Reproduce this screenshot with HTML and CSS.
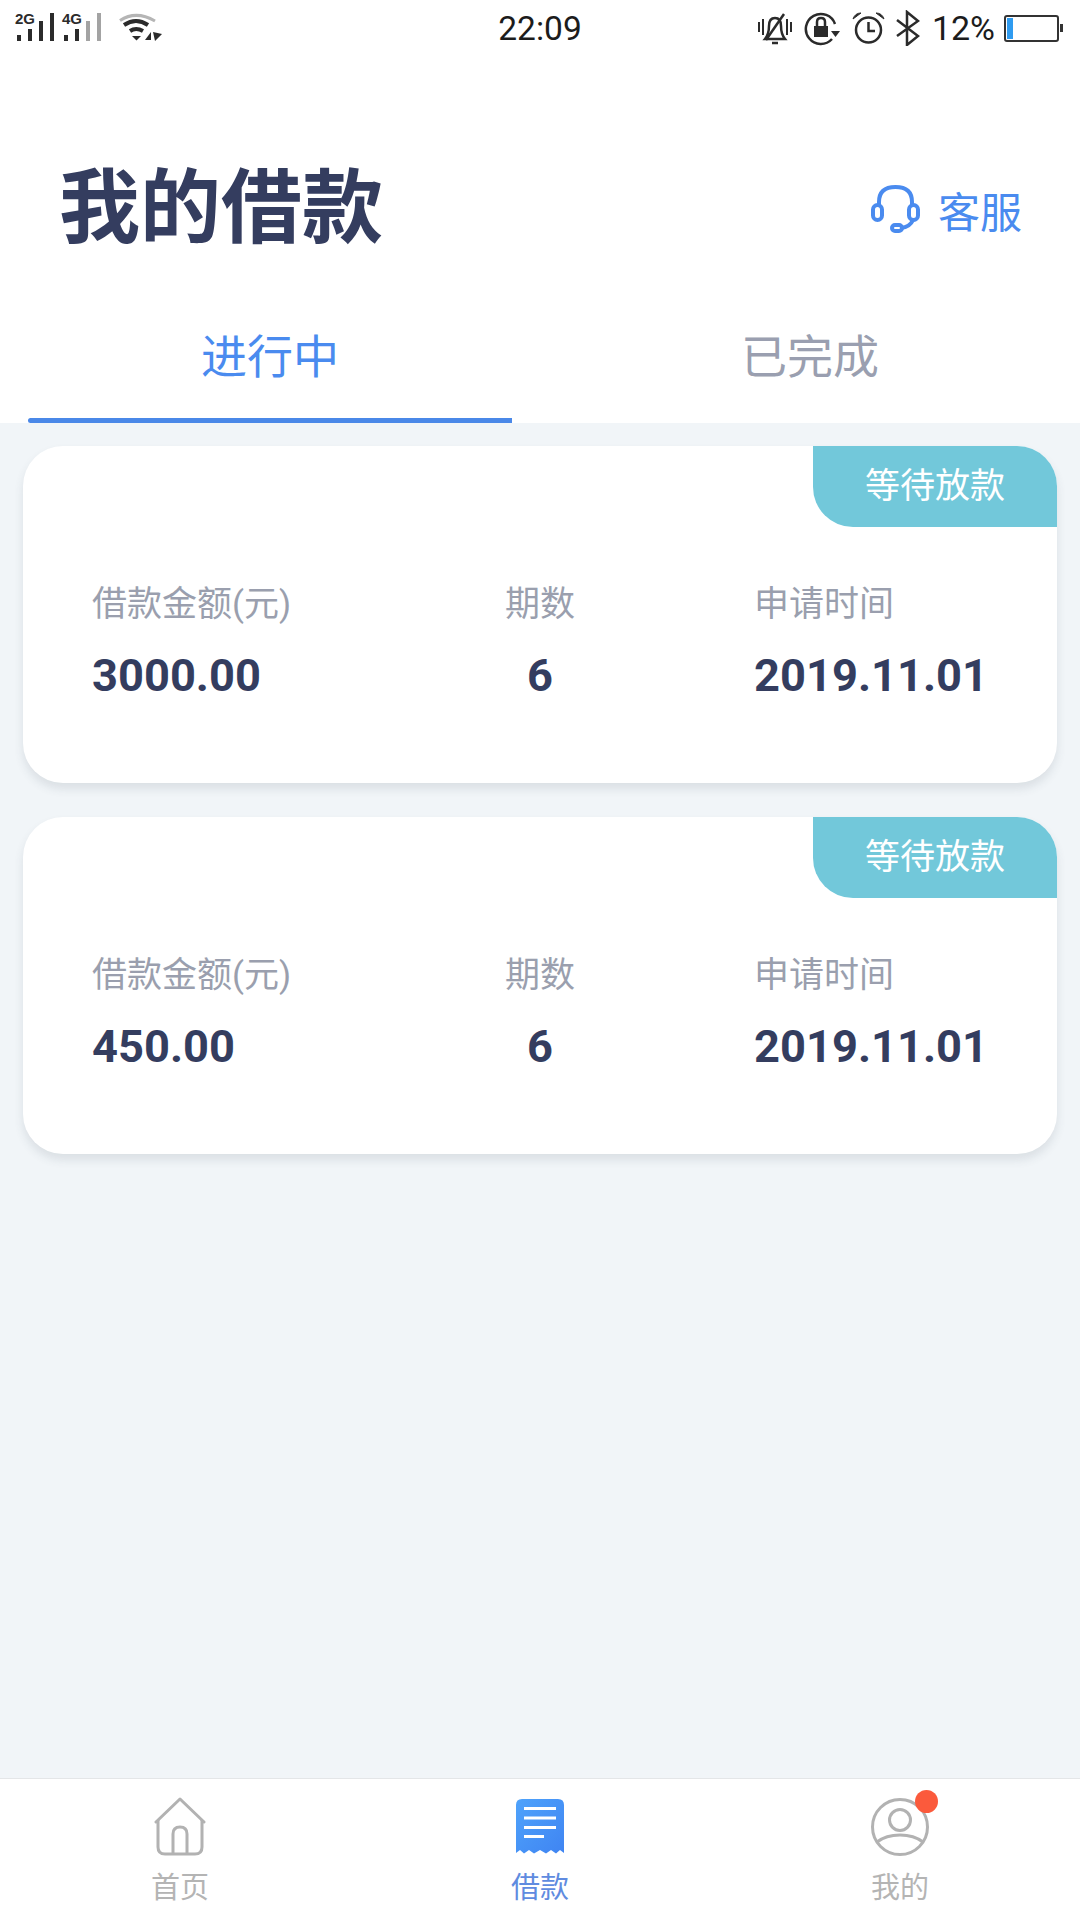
FILE: index.html
```html
<!DOCTYPE html>
<html lang="zh-CN">
<head>
    <meta charset="UTF-8">
    <meta name="viewport" content="width=device-width, initial-scale=1.0">
    <title>我的借款</title>
    <link rel="stylesheet" href="styles.css">
</head>
<body>
    <div class="status-bar">
        <svg class="status-left" width="170" height="56" viewBox="0 0 170 56">
            <text x="15" y="24" class="net-label">2G</text>
            <text x="62" y="24" class="net-label">4G</text>
            <g fill="#2b2b2b">
                <rect x="17" y="35" width="4" height="6"/>
                <rect x="28" y="29" width="4" height="12"/>
                <rect x="39" y="21" width="4" height="20"/>
                <rect x="50" y="13" width="4" height="28"/>
                <rect x="64" y="35" width="4" height="6"/>
                <rect x="75" y="29" width="4" height="12"/>
            </g>
            <g fill="#a3a3a3">
                <rect x="86" y="21" width="4" height="20"/>
                <rect x="97" y="13" width="4" height="28"/>
            </g>
            <path d="M120 20.500 Q136 10 155 21" fill="none" stroke="#b5b5b5" stroke-width="3"/>
            <g fill="none" stroke="#2b2b2b" stroke-width="4">
                <path d="M124 25 Q136 17 148 25"/>
                <path d="M130 31 Q136 27 143 31"/>
            </g>
            <path d="M132 36 L141 36 L136.500 40.500 Z" fill="#2b2b2b"/>
            <path d="M145 40 L151 32 L151 40 Z M153 32 L162 34 L155 41 Z" fill="#2b2b2b"/>
        </svg>
        <div class="clock">22:09</div>
        <div class="status-right">
            <svg class="bell" width="36" height="36" viewBox="0 0 36 36" fill="none" stroke="#2b2b2b" stroke-width="2.500">
                <path d="M8 29 Q12 24 12 16 Q12 8 18 8 Q24 8 24 16 Q24 24 28 29 Z"/>
                <path d="M9 30 L27 4"/>
                <path d="M15 33 L21 33"/>
                <path d="M2 12 L2 22 M6 9 L6 25 M30 9 L30 25 M34 12 L34 22" stroke-width="2"/>
            </svg>
            <svg class="lock" width="36" height="36" viewBox="0 0 36 36" fill="none" stroke="#2b2b2b" stroke-width="2.500">
                <path d="M31 14 A15 15 0 1 0 28 29"/>
                <rect x="10" y="16" width="14" height="11" fill="#2b2b2b" stroke="none"/>
                <path d="M13 16 V12 Q13 8 17 8 Q21 8 21 12 V16"/>
                <path d="M27 21 L36 21 L31.500 27 Z" fill="#2b2b2b" stroke="none"/>
            </svg>
            <svg class="alarm" width="33" height="36" viewBox="0 0 33 36" fill="none" stroke="#2b2b2b" stroke-width="2.500">
                <circle cx="16.500" cy="20" r="12.500"/>
                <path d="M16.500 12 V21 H23"/>
                <path d="M1 9 Q3 3 9 3 Z M32 9 Q30 3 24 3 Z" fill="#2b2b2b" stroke-width="1"/>
            </svg>
            <svg class="bluetooth" width="24" height="36" viewBox="0 0 24 36" fill="none" stroke="#2b2b2b" stroke-width="2.500">
                <path d="M1 10 L22 26 L11 35 L11 2 L22 11 L1 26"/>
            </svg>
            <span class="battery-text">12%</span>
            <div class="battery">
                <div class="battery-fill"></div>
            </div>
            <div class="battery-tip"></div>
        </div>
    </div>

    <div class="header">
        <h1>我的借款</h1>
        <a href="#" class="service">
            <svg width="52" height="48" viewBox="0 0 52 48" fill="none" stroke="#4a8bef" stroke-width="4">
                <path d="M9 20 V17 Q9 2 25.500 2 Q42 2 42 17 V20"/>
                <rect x="3" y="20" width="9" height="15" rx="4.500"/>
                <rect x="39" y="20" width="9" height="15" rx="4.500"/>
                <path d="M43 35 Q40 42 31 43"/>
                <rect x="22" y="40" width="10" height="6" rx="3"/>
            </svg>
            <span>客服</span>
        </a>
    </div>

    <div class="tabs">
        <a href="#" class="tab active">进行中</a>
        <a href="#" class="tab">已完成</a>
    </div>

    <div class="content">
        <div class="card">
            <div class="badge">等待放款</div>
            <div class="card-row">
                <div class="col">
                    <div class="label">借款金额(元)</div>
                    <div class="value">3000.00</div>
                </div>
                <div class="col center">
                    <div class="label">期数</div>
                    <div class="value">6</div>
                </div>
                <div class="col end">
                    <div class="label">申请时间</div>
                    <div class="value">2019.11.01</div>
                </div>
            </div>
        </div>
        <div class="card">
            <div class="badge">等待放款</div>
            <div class="card-row">
                <div class="col">
                    <div class="label">借款金额(元)</div>
                    <div class="value">450.00</div>
                </div>
                <div class="col center">
                    <div class="label">期数</div>
                    <div class="value">6</div>
                </div>
                <div class="col end">
                    <div class="label">申请时间</div>
                    <div class="value">2019.11.01</div>
                </div>
            </div>
        </div>
    </div>

    <nav class="bottom-nav">
        <a href="#" class="nav-item">
            <svg width="60" height="60" viewBox="0 0 60 60" fill="none" stroke="#b2b2b2" stroke-width="3">
                <path d="M6 25 L30 2 L54 25" stroke-linejoin="round" stroke-linecap="round"/>
                <path d="M8 23 V50 Q8 57 15 57 H45 Q52 57 52 50 V23"/>
                <path d="M23 57 V37 Q23 30 30 30 Q37 30 37 37 V57"/>
            </svg>
            <span>首页</span>
        </a>
        <a href="#" class="nav-item active">
            <svg width="60" height="60" viewBox="0 0 60 60">
                <defs>
                    <linearGradient id="doc-fill" x1="0" y1="0" x2="1" y2="1">
                        <stop offset="0" stop-color="#4fa3fb"/>
                        <stop offset="1" stop-color="#3f84f2"/>
                    </linearGradient>
                </defs>
                <path d="M6 8 Q6 2 12 2 H48 Q54 2 54 8 V56 L50 53 L46 56.500 L41 53 L36 56.500 L30 53 L24 56.500 L19 53 L14 56.500 L10 53 L6 56 Z" fill="url(#doc-fill)"/>
                <g fill="#fff">
                    <rect x="14" y="10" width="32" height="3"/>
                    <rect x="14" y="19.500" width="32" height="3"/>
                    <rect x="14" y="29" width="32" height="3"/>
                    <rect x="14" y="38" width="20" height="3"/>
                </g>
            </svg>
            <span>借款</span>
        </a>
        <a href="#" class="nav-item">
            <span class="avatar">
                <svg width="60" height="60" viewBox="0 0 60 60" fill="none" stroke="#b2b2b2" stroke-width="3">
                    <circle cx="30" cy="30" r="27.500"/>
                    <circle cx="30" cy="23" r="10.500"/>
                    <path d="M7 45 Q16 38 30 38 Q44 38 53 45"/>
                </svg>
                <span class="dot"></span>
            </span>
            <span>我的</span>
        </a>
    </nav>
</body>
</html>
```

FILE: styles.css
```css
body {
    font-family: Roboto, "Noto Sans CJK SC", sans-serif;
    margin: 0;
    padding: 0;
    width: 1080px;
    height: 1920px;
    display: flex;
    flex-direction: column;
    background-color: #fff;
    overflow: hidden;
}
a {
    text-decoration: none;
}
.status-bar {
    height: 56px;
    display: grid;
    grid-template-columns: 1fr auto 1fr;
    align-items: center;
}
.status-left {
    display: block;
}
.net-label {
    font-family: "Liberation Sans", sans-serif;
    font-size: 15px;
    font-weight: 700;
    fill: #2b2b2b;
}
.clock {
    font-size: 33.500px;
    color: #1c1c1c;
}
.status-right {
    display: flex;
    align-items: center;
    justify-content: flex-end;
    padding-right: 17px;
}
.bell {
    margin-right: 11px;
}
.lock {
    margin-right: 12px;
}
.alarm {
    margin-right: 11px;
}
.bluetooth {
    margin-right: 12px;
}
.battery-text {
    font-size: 34px;
    color: #1c1c1c;
    margin-right: 9px;
}
.battery {
    width: 49px;
    height: 21px;
    border: 2px solid #333;
    border-radius: 3px;
    padding: 1px;
}
.battery-fill {
    width: 6px;
    height: 100%;
    background-color: #2f9bf0;
}
.battery-tip {
    width: 3px;
    height: 8px;
    margin-left: 1px;
    background-color: #333;
}
.header {
    height: 208px;
    display: flex;
    align-items: center;
    justify-content: space-between;
    padding: 98px 58px 0 59px;
    box-sizing: border-box;
}
.header h1 {
    margin: 0;
    font-size: 81px;
    line-height: 90px;
    font-weight: 700;
    color: #343d5f;
}
.service {
    display: flex;
    align-items: center;
    gap: 16px;
    font-size: 42px;
    color: #4a8bef;
}
.tabs {
    height: 159px;
    box-sizing: border-box;
    padding: 0 28px;
    display: grid;
    grid-template-columns: 484px 1fr;
}
.tab {
    position: relative;
    display: flex;
    align-items: center;
    justify-content: center;
    font-size: 46px;
    color: #9a9fb0;
    padding-top: 24px;
    padding-bottom: 5px;
    box-sizing: border-box;
}
.tab.active {
    color: #4a8bef;
}
.tab.active::after {
    content: "";
    position: absolute;
    left: 0;
    right: 0;
    bottom: 0;
    height: 5px;
    border-radius: 3px 0 0 3px;
    background-color: #4a88e8;
}
.tab:last-child {
    padding-left: 56px;
}
.content {
    flex: 1;
    background-color: #f1f5f8;
    padding: 23px;
    display: flex;
    flex-direction: column;
    gap: 34px;
}
.card {
    position: relative;
    height: 337px;
    background-color: #fff;
    border-radius: 40px;
    box-shadow: 0 6px 10px rgba(60, 70, 90, 0.12);
}
.badge {
    position: absolute;
    top: 0;
    right: 0;
    width: 244px;
    height: 81px;
    padding-bottom: 9px;
    box-sizing: border-box;
    display: flex;
    align-items: center;
    justify-content: center;
    font-size: 35px;
    color: #fff;
    background-color: #72c8da;
    border-radius: 0 40px 0 40px;
}
.card-row {
    display: grid;
    grid-template-columns: 1fr 280px 1fr;
    padding: 132px 69px 0 69px;
}
.col {
    display: flex;
    flex-direction: column;
}
.col.center {
    align-items: center;
}
.col.end {
    justify-self: end;
}
.label {
    font-size: 35px;
    line-height: 54px;
    color: #9a9fae;
}
.value {
    margin-top: 17px;
    font-size: 45.250px;
    line-height: 54px;
    font-weight: 700;
    color: #343d5f;
}
.bottom-nav {
    height: 142px;
    box-sizing: border-box;
    border-top: 1px solid #e4e6e8;
    display: grid;
    grid-template-columns: repeat(3, 1fr);
    background-color: #fff;
}
.nav-item {
    display: flex;
    flex-direction: column;
    align-items: center;
    padding-top: 18px;
    font-size: 29px;
    line-height: 40px;
    color: #b4b4b4;
}
.nav-item svg {
    display: block;
}
.nav-item > span:last-child {
    margin-top: 11px;
}
.nav-item.active {
    color: #5f8be0;
}
.avatar {
    position: relative;
    display: block;
}
.dot {
    position: absolute;
    top: -7px;
    left: 45px;
    width: 23px;
    height: 23px;
    border-radius: 50%;
    background-color: #fb5a3c;
}
```
